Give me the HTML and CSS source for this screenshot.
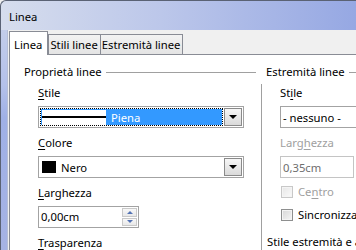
FILE: index.html
```html
<!DOCTYPE html>
<html lang="it">
<head>
  <meta charset="UTF-8">
  <title>Linea</title>
  <link rel="stylesheet" href="styles.css">
</head>
<body>

<div class="window">
  <div class="titlebar">Linea</div>
  <div class="frame">
    <div class="edge"></div>
    <div class="client">
      <div class="tabs">
        <div class="tab active">Linea</div>
        <div class="tab">Stili linee</div>
        <div class="tab">Estremità linee</div>
      </div>

      <div class="page">
        <div class="section left">
          <div class="heading">Proprietà linee</div>
          <div class="body">
            <div class="label"><u>S</u>tile</div>
            <div class="combo">
              <div class="value selected">
                <span class="preview"><span class="stroke"></span></span>
                <span>Piena</span>
              </div>
              <div class="drop"><span class="arrow"></span></div>
            </div>

            <div class="label"><u>C</u>olore</div>
            <div class="combo">
              <div class="value">
                <span class="swatch"></span>
                <span>Nero</span>
              </div>
              <div class="drop"><span class="arrow"></span></div>
            </div>

            <div class="label"><u>L</u>arghezza</div>
            <div class="spin">
              <div class="spin-text">0,00cm</div>
              <div class="spin-btns">
                <div class="spin-btn"><span class="up"></span></div>
                <div class="spin-btn"><span class="down"></span></div>
              </div>
            </div>

            <div class="label"><u>T</u>rasparenza</div>
          </div>
        </div>

        <div class="section right">
          <div class="heading">Estremità linee</div>
          <div class="body">
            <div class="label">St<u>i</u>le</div>
            <div class="combo open">
              <div class="value">- nessuno -</div>
            </div>

            <div class="label disabled">Larg<u>h</u>ezza</div>
            <div class="combo open field-disabled">
              <div class="value">0,35cm</div>
            </div>

            <div class="check disabled first"><span class="box"></span><span>Ce<u>n</u>tro</span></div>
            <div class="check"><span class="box"></span><span>Sincronizza</span></div>

            <div class="heading sub">Stile estremità e a</div>
          </div>
        </div>
      </div>
    </div>
  </div>
</div>

</body>
</html>
```

FILE: styles.css
```css
* { box-sizing: border-box; }
body {
  margin: 0;
  width: 356px;
  height: 250px;
  overflow: hidden;
  font-family: "Noto Sans", sans-serif;
  font-size: 11.25px;
  color: #000;
  background: #f0f0f0;
}

u { text-decoration: underline; text-underline-offset: 2px; }

.window {
  display: flex;
  flex-direction: column;
  width: 356px;
  height: 250px;
  overflow: hidden;
}

.titlebar {
  flex-shrink: 0;
  height: 30px;
  padding-left: 8px;
  line-height: 31px;
  border-top: 1px solid #5a6274;
  border-left: 1px solid #5a6274;
  border-top-left-radius: 6px;
  background: linear-gradient(to right, #d6dded 0%, #bcc7ea 45%, #96a8e3 100%);
}

.frame {
  flex: 1;
  display: flex;
  min-height: 0;
}

.edge {
  flex-shrink: 0;
  width: 8px;
  border-left: 1px solid #5a6274;
  border-right: 1px solid #b4bdd6;
  background: linear-gradient(to bottom, #c3cdea 0%, #b4c1ea 25%, #9fb0e6 40%, #a6b3e4 100%);
}

.client {
  flex: 1;
  min-width: 0;
  display: flex;
  flex-direction: column;
  padding: 1px 0 0 1px;
  background: #f0f0f0;
}

/* tabs */
.tabs {
  display: flex;
  align-items: flex-end;
  height: 23px;
  flex-shrink: 0;
}

.tab {
  height: 20px;
  line-height: 19px;
  padding: 0 2px 0 1px;
  margin-left: -1px;
  border: 1px solid #898c95;
  border-bottom: none;
  white-space: nowrap;
  background: linear-gradient(#f3f3f3, #e4e4e4);
}

.tab.active {
  height: 24px;
  line-height: 26px;
  margin-left: 0;
  margin-bottom: -1px;
  margin-right: 1px;
  padding: 0 5px 0 4px;
  background: #fff;
  position: relative;
  z-index: 1;
}

.page {
  flex: 1;
  display: flex;
  padding-top: 10px;
  background: #fff;
  border-top: 1px solid #898c95;
  border-left: 1px solid #898c95;
}

/* sections */
.section.left {
  flex-shrink: 0;
  width: 246px;
  padding-left: 14px;
}

.section.right {
  flex: 1;
  min-width: 0;
  padding-left: 10px;
}

.heading {
  display: flex;
  align-items: center;
  gap: 4px;
  height: 14px;
  line-height: 14px;
  white-space: nowrap;
}

.heading::after {
  content: "";
  flex: 1;
  border-top: 1px solid #a0a0a0;
}

.left .body {
  padding: 7px 0 0 14px;
}

.right .body {
  margin: 5px 0 0 -5px;
  padding: 2px 0 0 18px;
  border-left: 1px solid #a0a0a0;
  height: 200px;
}

.label {
  height: 14px;
  line-height: 14px;
  margin-bottom: 6px;
  white-space: nowrap;
}

.label.disabled { color: #a0a0a0; }

/* combo boxes */
.combo {
  display: flex;
  width: 206px;
  height: 22px;
  margin-bottom: 8px;
  padding: 1px;
  border: 1px solid #a3a3a3;
  background: #fff;
}

.value {
  flex: 1;
  display: flex;
  align-items: center;
  gap: 5px;
  padding-left: 2px;
  white-space: nowrap;
}

.value.selected {
  padding-left: 1px;
  margin-right: 1px;
  color: #fff;
  background: #3399ff;
  background-clip: padding-box;
  border: 1px dotted #000;
}

.preview {
  width: 64px;
  height: 15px;
  display: flex;
  align-items: center;
  background: #fff;
}

.stroke {
  flex: 1;
  height: 2px;
  background: #000;
}

.swatch {
  width: 14px;
  height: 12px;
  background: #000;
}

.drop {
  width: 18px;
  display: flex;
  align-items: center;
  justify-content: center;
  border: 1px solid #8a8a8a;
  background: linear-gradient(#f6f6f6, #dadada);
}

.arrow {
  width: 0;
  height: 0;
  border-left: 4px solid transparent;
  border-right: 4px solid transparent;
  border-top: 4px solid #000;
}

.combo.open {
  width: 100px;
  padding-left: 0;
}

.combo.open.field-disabled {
  width: 74px;
  border-color: #c4c4c4;
  color: #6e6e6e;
}

/* spin field */
.spin {
  display: flex;
  width: 101px;
  height: 22px;
  margin-bottom: 8px;
  padding: 1px;
  border: 1px solid #a3a3a3;
  background: #fff;
}

.spin-text {
  flex: 1;
  line-height: 18px;
  padding-left: 1px;
}

.spin-btns {
  width: 15px;
  display: flex;
  flex-direction: column;
  gap: 1px;
}

.spin-btn {
  flex: 1;
  display: flex;
  align-items: center;
  justify-content: center;
  border: 1px solid #c9c9c9;
  background: linear-gradient(#f8f8f8, #e8e8e8);
}

.up, .down {
  width: 0;
  height: 0;
  border-left: 3px solid transparent;
  border-right: 3px solid transparent;
}

.up { border-bottom: 3px solid #5372b4; }
.down { border-top: 3px solid #5372b4; }

/* check boxes */
.check {
  display: flex;
  align-items: center;
  gap: 5px;
  height: 14px;
  line-height: 14px;
  padding-left: 1px;
  margin-bottom: 9px;
  white-space: nowrap;
}

.check.first { margin-top: -1px; }

.box {
  flex-shrink: 0;
  width: 12px;
  height: 12px;
  border: 1px solid #8e8f8f;
  background: linear-gradient(135deg, #d6d6d6, #f6f6f6);
  box-shadow: inset 0 0 0 1px #f4f4f4;
}

.check.disabled { color: #a0a0a0; }
.check.disabled .box {
  border-color: #c8c8c8;
  background: linear-gradient(135deg, #e6e6e6, #fafafa);
}

.heading.sub {
  margin: 13px 0 0 -13px;
}
```
